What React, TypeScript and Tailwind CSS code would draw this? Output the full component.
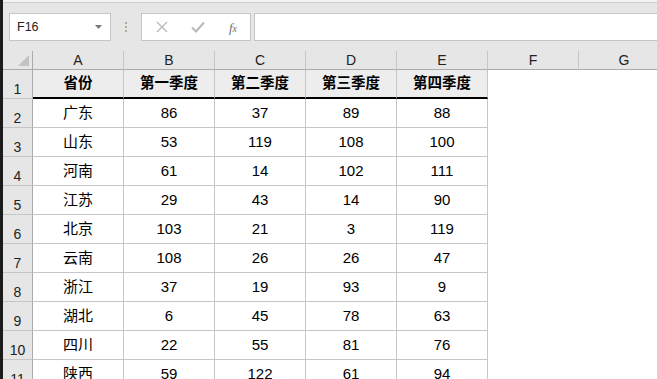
import React from "react";

const rows: [string, number, number, number, number][] = [
  ["广东", 86, 37, 89, 88],
  ["山东", 53, 119, 108, 100],
  ["河南", 61, 14, 102, 111],
  ["江苏", 29, 43, 14, 90],
  ["北京", 103, 21, 3, 119],
  ["云南", 108, 26, 26, 47],
  ["浙江", 37, 19, 93, 9],
  ["湖北", 6, 45, 78, 63],
  ["四川", 22, 55, 81, 76],
  ["陕西", 59, 122, 61, 94],
];

const font = { fontFamily: '"Liberation Sans", "Noto Sans CJK SC", sans-serif' };
const cols = ["A", "B", "C", "D", "E", "F", "G"];
const headers = ["省份", "第一季度", "第二季度", "第三季度", "第四季度"];

export default function App() {
  return (
    <div className="w-[657px] h-[379px] overflow-hidden bg-white flex" style={font}>
      <div className="w-[3px] shrink-0 bg-[#1c1c1c]" />
      <div className="flex-1 flex flex-col min-w-0">
        <div className="h-[3px] shrink-0 bg-[#f2f2f2] border-b border-[#cfcfcf]" />
        <div className="h-[48px] shrink-0 bg-[#e6e6e6] flex items-start pt-[10px] pl-[6px]">
          <div className="w-[102px] h-[28px] bg-white border border-[#c6c6c6] flex items-center justify-between pl-[7px] pr-[8px]">
            <span className="text-[12.5px] text-[#222]">F16</span>
            <svg width="7" height="4" viewBox="0 0 7 4">
              <polygon points="0,0 7,0 3.5,4" fill="#7a7a7a" />
            </svg>
          </div>
          <div className="w-[30px] h-[28px] flex flex-col items-center justify-center gap-[2px]">
            <div className="w-[2px] h-[2px] bg-[#b3a996]" />
            <div className="w-[2px] h-[2px] bg-[#b3a996]" />
            <div className="w-[2px] h-[2px] bg-[#b3a996]" />
          </div>
          <div className="w-[110px] h-[28px] bg-white border border-[#c6c6c6] flex items-center">
            <div className="w-[38px] flex justify-center pl-[2px]">
              <svg width="12" height="12" viewBox="0 0 12 12">
                <path d="M1 1 L11 11 M11 1 L1 11" stroke="#b9b9b9" strokeWidth="1.4" />
              </svg>
            </div>
            <div className="w-[36px] flex justify-center">
              <svg width="14" height="12" viewBox="0 0 14 12">
                <path d="M1 6.5 L5 10.5 L13 1.5" stroke="#b9b9b9" strokeWidth="2" fill="none" />
              </svg>
            </div>
            <div className="w-[34px] flex justify-center">
              <span
                className="text-[13px] italic text-[#6f6f6f] leading-none"
                style={{ fontFamily: '"Liberation Serif", serif' }}
              >
                f<span className="text-[10px]">x</span>
              </span>
            </div>
          </div>
          <div className="ml-[3px] flex-1 h-[28px] bg-white border-y border-l border-[#c6c6c6]" />
        </div>
        <div className="shrink-0 grid grid-cols-[30px_91px_91px_91px_91px_91px_91px_91px]">
          {/* column header row */}
          <div className="h-[19px] bg-[#e6e6e6] border-r border-b border-[#ababab] relative">
            <svg className="absolute left-[15px] top-[4px]" width="11" height="11" viewBox="0 0 11 11">
              <polygon points="11,0 11,11 0,11" fill="#c2c2c2" />
            </svg>
          </div>
          {cols.map((c) => (
            <div
              key={c}
              className="h-[19px] bg-[#e6e6e6] border-r border-[#c6c6c6] border-b border-b-[#ababab] flex items-center justify-center text-[14px] text-[#222] leading-none"
            >
              {c}
            </div>
          ))}
          {/* row 1 */}
          <div className="h-[29px] bg-[#e6e6e6] border-r border-[#ababab] border-b border-b-[#c6c6c6] flex items-end justify-center pb-[2px] text-[14px] text-[#222] leading-none">
            1
          </div>
          {headers.map((h) => (
            <div
              key={h}
              className="h-[29px] bg-[#ededed] border-r border-[#c6c6c6] border-b-2 border-b-black flex items-center justify-center text-[14.5px] font-bold text-black"
            >
              {h}
            </div>
          ))}
          <div className="h-[29px] bg-white" />
          <div className="h-[29px] bg-white" />
          {rows.map((r, i) => (
            <React.Fragment key={i}>
              <div className="h-[29px] bg-[#e6e6e6] border-r border-[#ababab] border-b border-b-[#c6c6c6] flex items-end justify-center pb-[2px] text-[14px] text-[#222] leading-none">
                {i + 2}
              </div>
              {r.map((v, j) => (
                <div
                  key={j}
                  className="h-[29px] bg-white border-r border-b border-[#c6c6c6] flex items-center justify-center pt-[1px] text-[15px] text-black"
                >
                  {v}
                </div>
              ))}
              <div className="h-[29px] bg-white" />
              <div className="h-[29px] bg-white" />
            </React.Fragment>
          ))}
        </div>
      </div>
    </div>
  );
}
